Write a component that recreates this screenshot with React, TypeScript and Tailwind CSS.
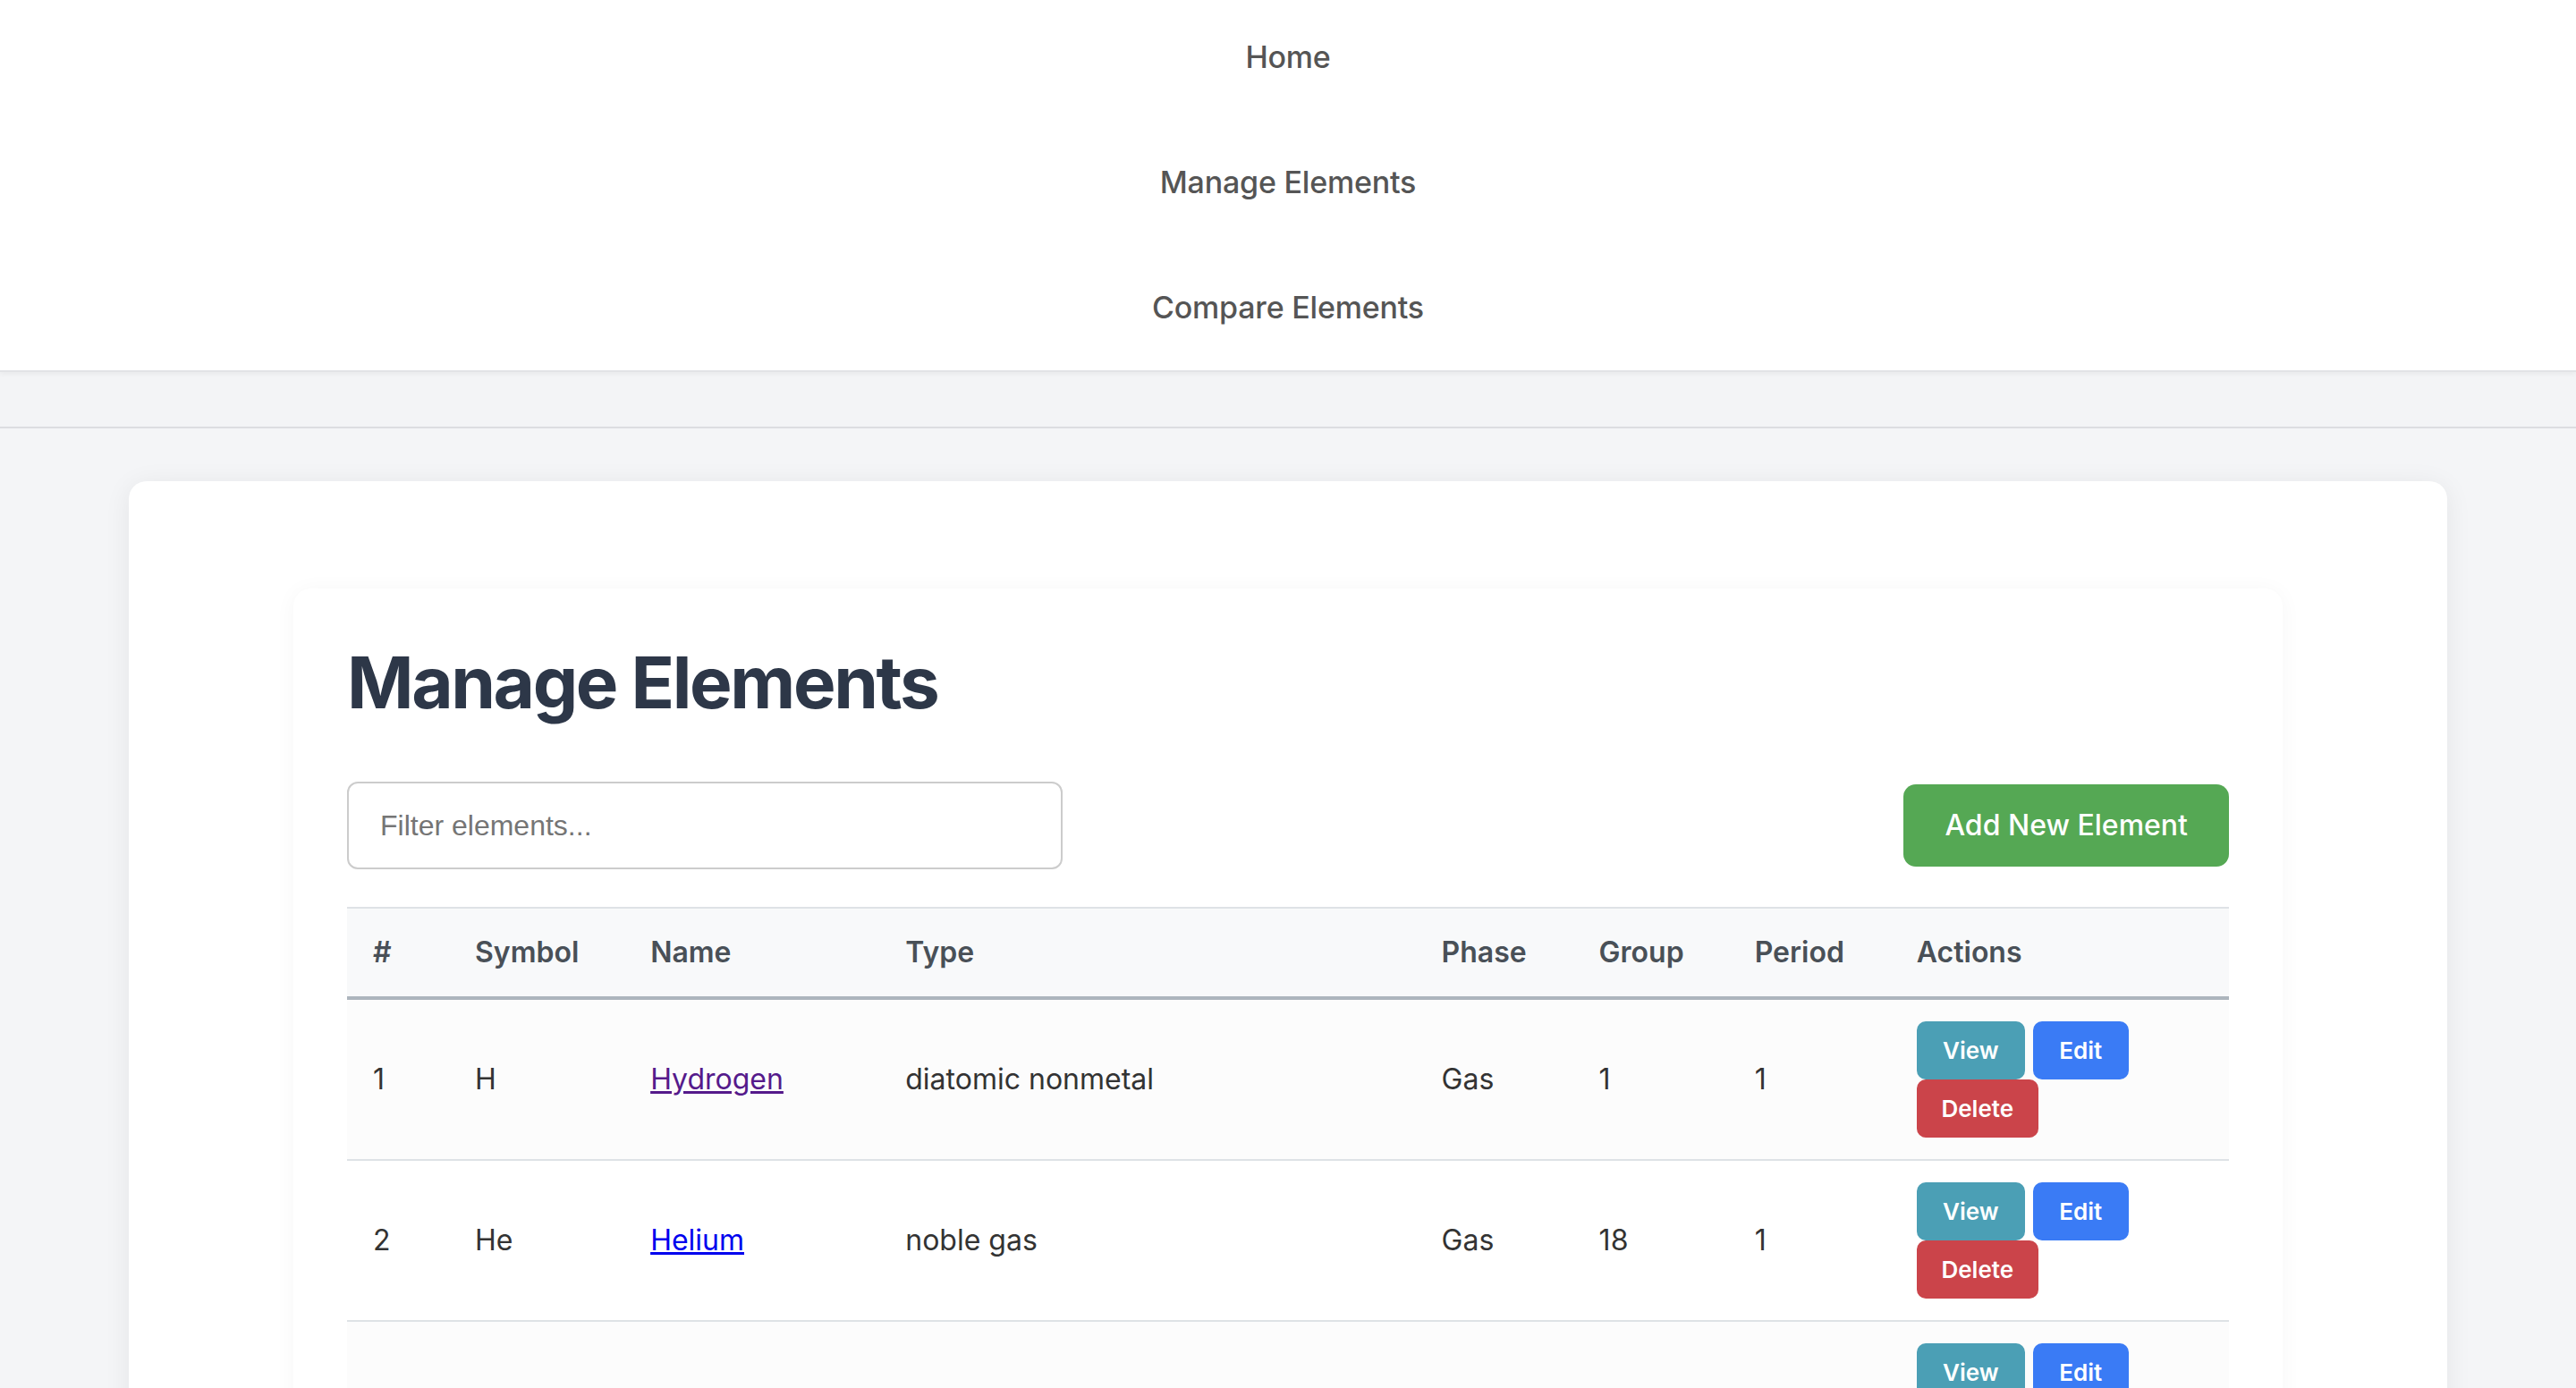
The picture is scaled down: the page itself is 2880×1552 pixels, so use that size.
import React from "react";

type Row = {
  n: number;
  sym: string;
  name: string;
  type: string;
  phase: string;
  group: number;
  period: number;
  visited?: boolean;
};

const rows: Row[] = [
  { n: 1, sym: "H", name: "Hydrogen", type: "diatomic nonmetal", phase: "Gas", group: 1, period: 1, visited: true },
  { n: 2, sym: "He", name: "Helium", type: "noble gas", phase: "Gas", group: 18, period: 1 },
  { n: 3, sym: "Li", name: "Lithium", type: "alkali metal", phase: "Solid", group: 1, period: 2 },
  { n: 4, sym: "Be", name: "Beryllium", type: "alkaline earth metal", phase: "Solid", group: 2, period: 2 },
];

const headers = ["#", "Symbol", "Name", "Type", "Phase", "Group", "Period", "Actions"];
const widths = [119, 196, 285, 599, 176, 174, 181, 373];

export default function App() {
  return (
    <div className="min-h-screen bg-[#f4f5f7] font-['Inter',sans-serif]">
      <nav className="bg-white border-b-2 border-[#e2e3e6] shadow-[0_2px_6px_rgba(0,0,0,0.05)] pt-[38px] pb-[44px] relative">
        <ul className="flex flex-col items-center gap-[88px]">
          {["Home", "Manage Elements", "Compare Elements"].map((t) => (
            <li key={t} className="text-[34px] leading-[52px] font-medium text-[#555555] tracking-[-0.2px]">
              {t}
            </li>
          ))}
        </ul>
      </nav>
      <div className="h-[63px] bg-[#f3f4f6] border-b-2 border-[#dcdde1]" />
      <main className="pt-[59px] px-[144px]">
        <div className="bg-white rounded-[20px] shadow-[0_4px_30px_rgba(0,0,0,0.07)] pt-[120px] px-[184px] pb-[120px]">
          <div className="bg-white rounded-[20px] shadow-[0_2px_24px_rgba(0,0,0,0.04)] px-[60px] pt-[57px] pb-[60px]">
            <h1 className="text-[80px] leading-[96px] font-bold text-[#2d3748] tracking-[-2.4px]">
              Manage Elements
            </h1>
            <div className="flex items-center justify-between mt-[63px] mb-[42px]">
              <input
                type="text"
                placeholder="Filter elements..."
                className="w-[800px] h-[98px] border-2 border-[#cccccc] rounded-[12px] pl-[35px] font-['Liberation_Sans',Arial,sans-serif] text-[32px] text-[#333] placeholder:text-[#757575] outline-none bg-white"
              />
              <button className="h-[92px] px-[46px] rounded-[14px] bg-[#55a854] text-white text-[32px] font-medium">
                Add New Element
              </button>
            </div>
            <table className="w-full table-fixed border-separate border-spacing-0 text-[32px] leading-[48px]">
              <colgroup>
                {widths.map((w, i) => (
                  <col key={i} style={{ width: w }} />
                ))}
              </colgroup>
              <thead>
                <tr>
                  {headers.map((h, i) => (
                    <th
                      key={h}
                      className={
                        "text-left font-semibold text-[#495057] bg-[#f8f9fa] py-[25px] border-t-2 border-b-4 border-t-[#dee2e6] border-b-[#adb5bd] " +
                        (i === 0 ? "pl-[29px] pr-[24px]" : "px-[24px]")
                      }
                    >
                      {h}
                    </th>
                  ))}
                </tr>
              </thead>
              <tbody>
                {rows.map((r, i) => (
                  <tr key={r.n} className={i % 2 === 0 ? "bg-[#fcfcfc]" : "bg-white"}>
                    <td className="pl-[29px] pr-[24px] py-[24px] align-middle text-[#333] border-b-2 border-[#dee2e6]">{r.n}</td>
                    <td className="px-[24px] py-[24px] align-middle text-[#333] border-b-2 border-[#dee2e6]">{r.sym}</td>
                    <td className="px-[24px] py-[24px] align-middle border-b-2 border-[#dee2e6]">
                      <a
                        href="#"
                        className={"underline " + (r.visited ? "text-[#551a8b]" : "text-[#0000ee]")}
                      >
                        {r.name}
                      </a>
                    </td>
                    <td className="px-[24px] py-[24px] align-middle text-[#333] border-b-2 border-[#dee2e6]">{r.type}</td>
                    <td className="px-[24px] py-[24px] align-middle text-[#333] border-b-2 border-[#dee2e6]">{r.phase}</td>
                    <td className="px-[24px] py-[24px] align-middle text-[#333] border-b-2 border-[#dee2e6]">{r.group}</td>
                    <td className="px-[24px] py-[24px] align-middle text-[#333] border-b-2 border-[#dee2e6]">{r.period}</td>
                    <td className="px-[24px] py-[24px] align-middle border-b-2 border-[#dee2e6]">
                      <div className="flex flex-wrap gap-x-[9px]">
                        <button className="h-[65px] w-[121px] rounded-[10px] bg-[#4b9fb5] text-white text-[26px] leading-[39px] font-semibold">
                          View
                        </button>
                        <button className="h-[65px] w-[107px] rounded-[10px] bg-[#3a7bf5] text-white text-[26px] leading-[39px] font-semibold">
                          Edit
                        </button>
                        <button className="h-[65px] w-[136px] rounded-[10px] bg-[#cb444a] text-white text-[26px] leading-[39px] font-semibold">
                          Delete
                        </button>
                      </div>
                    </td>
                  </tr>
                ))}
              </tbody>
            </table>
          </div>
        </div>
      </main>
    </div>
  );
}
